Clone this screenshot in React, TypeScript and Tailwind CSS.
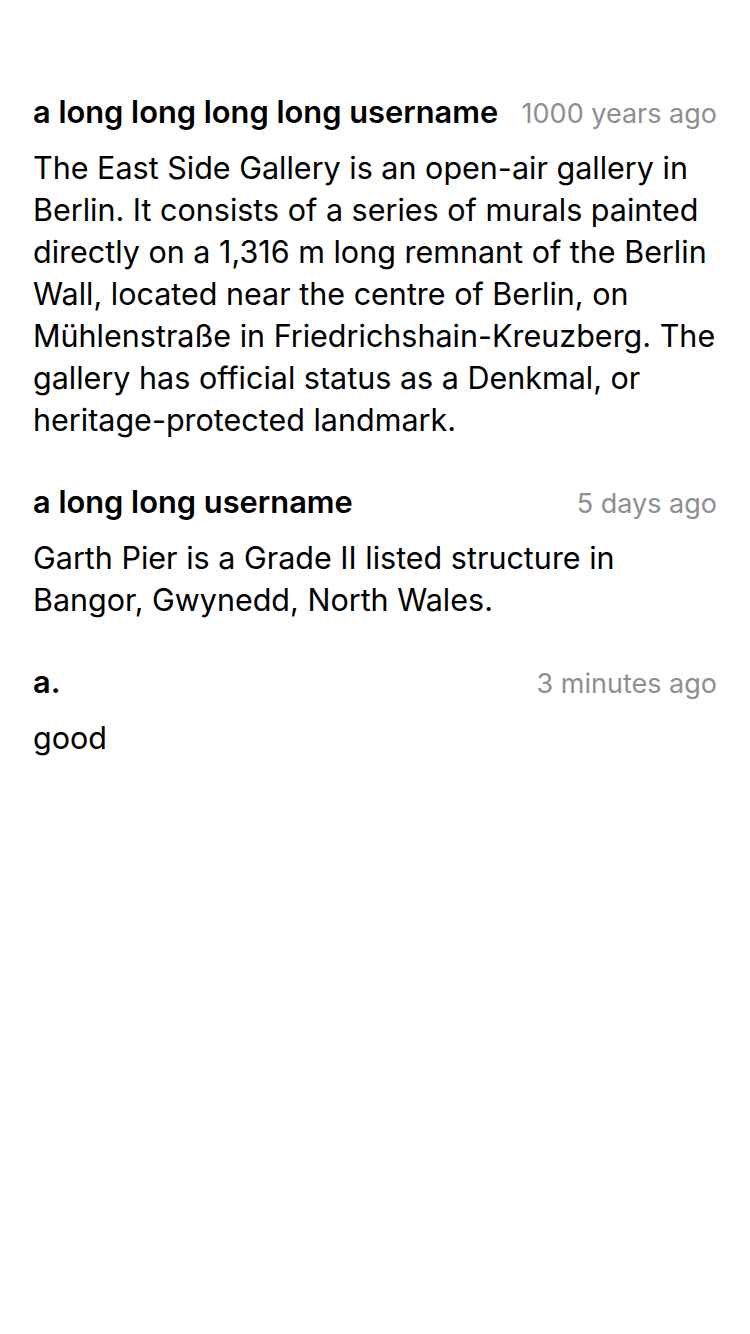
const comments = [
  {
    user: 'a long long long long username',
    time: '1000 years ago',
    text: 'The East Side Gallery is an open-air gallery in Berlin. It consists of a series of murals painted directly on a 1,316 m long remnant of the Berlin Wall, located near the centre of Berlin, on Mühlenstraße in Friedrichshain-Kreuzberg. The gallery has official status as a Denkmal, or heritage-protected landmark.',
  },
  {
    user: 'a long long username',
    time: '5 days ago',
    text: 'Garth Pier is a Grade II listed structure in Bangor, Gwynedd, North Wales.',
  },
  {
    user: 'a.',
    time: '3 minutes ago',
    text: 'good',
  },
]

export default function App() {
  return (
    <div
      className="min-h-screen w-full bg-white px-[33px] pt-[91px] text-black"
      style={{ fontFamily: 'Inter, "Noto Sans", sans-serif' }}
    >
      <div className="flex flex-col gap-[40px]">
        {comments.map((c) => (
          <div key={c.user}>
            <div className="flex items-baseline justify-between gap-[16px] leading-[42px]">
              <span className="text-[30.8px] font-semibold whitespace-nowrap">{c.user}</span>
              <span className="shrink-0 text-[27px] text-[#8e8e93]">{c.time}</span>
            </div>
            <p className="mt-[12px] text-[30.5px] leading-[42px]">{c.text}</p>
          </div>
        ))}
      </div>
    </div>
  )
}
